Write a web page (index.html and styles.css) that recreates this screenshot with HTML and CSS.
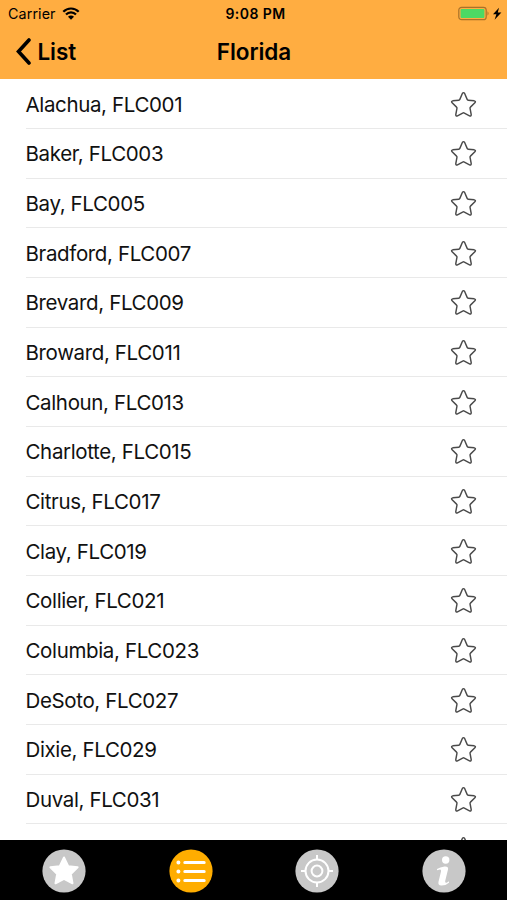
FILE: index.html
```html
<!DOCTYPE html>
<html lang="en">
<head>
<meta charset="utf-8">
<title>Florida</title>
<link rel="stylesheet" href="styles.css">
</head>
<body>
<svg width="0" height="0" class="defs" aria-hidden="true">
  <symbol id="star" viewBox="0 0 28 28">
    <path d="M12.8 2.6Q14 .8 15.2 2.6L17.8 8.7Q18.1 9.4 18.9 9.5L25.1 10.2Q27.2 10.7 25.8 12.3L21.2 16.7Q20.6 17.2 20.8 18L22 24.5Q22.1 26.6 20.2 25.7L14.9 22.9Q14 22.4 13.1 22.9L7.8 25.7Q5.9 26.6 6 24.5L7.2 18Q7.4 17.2 6.8 16.7L2.2 12.3Q.8 10.7 2.9 10.2L9.1 9.5Q9.9 9.4 10.2 8.7Z"/>
  </symbol>
</svg>
<div class="screen">
  <header class="header">
    <div class="status">
      <div class="carrier"><span>Carrier</span>
        <svg width="18" height="13" viewBox="0 0 18 13"><path d="M1.3 4.8A10.6 10.6 0 0 1 16.7 4.8M4 7.6A6.8 6.8 0 0 1 14 7.6" fill="none" stroke="#000" stroke-width="2.2"/><path d="M6 9.7A4.1 4.1 0 0 1 12 9.7L9 12.7Z"/></svg>
      </div>
      <span class="time">9:08 PM</span>
      <div class="power">
        <svg width="44" height="16" viewBox="0 0 44 16"><rect x=".8" y="1.3" width="27.4" height="12.4" rx="2.8" fill="none" stroke="#a9722a" stroke-width="1.2"/><rect x="2.6" y="3.1" width="23.8" height="8.8" rx="1" fill="#4cd964"/><path d="M29.5 5.3Q31.6 7.5 29.5 9.7Z" fill="#a9722a"/><path d="M41 1.8L35 8.2H38.4L36.6 13.8L43.4 6.6H39.8Z"/></svg>
      </div>
    </div>
    <nav class="nav">
      <a class="back"><svg width="16" height="27" viewBox="0 0 16 27"><path d="M14 2L3.5 13.5L14 25" fill="none" stroke="#000" stroke-width="3.6" stroke-linecap="round"/></svg><span>List</span></a>
      <h1>Florida</h1>
      <span></span>
    </nav>
  </header>
  <ul class="list">
    <li><span>Alachua, FLC001</span><svg class="star"><use href="#star"/></svg></li>
    <li><span>Baker, FLC003</span><svg class="star"><use href="#star"/></svg></li>
    <li><span>Bay, FLC005</span><svg class="star"><use href="#star"/></svg></li>
    <li><span>Bradford, FLC007</span><svg class="star"><use href="#star"/></svg></li>
    <li><span>Brevard, FLC009</span><svg class="star"><use href="#star"/></svg></li>
    <li><span>Broward, FLC011</span><svg class="star"><use href="#star"/></svg></li>
    <li><span>Calhoun, FLC013</span><svg class="star"><use href="#star"/></svg></li>
    <li><span>Charlotte, FLC015</span><svg class="star"><use href="#star"/></svg></li>
    <li><span>Citrus, FLC017</span><svg class="star"><use href="#star"/></svg></li>
    <li><span>Clay, FLC019</span><svg class="star"><use href="#star"/></svg></li>
    <li><span>Collier, FLC021</span><svg class="star"><use href="#star"/></svg></li>
    <li><span>Columbia, FLC023</span><svg class="star"><use href="#star"/></svg></li>
    <li><span>DeSoto, FLC027</span><svg class="star"><use href="#star"/></svg></li>
    <li><span>Dixie, FLC029</span><svg class="star"><use href="#star"/></svg></li>
    <li><span>Duval, FLC031</span><svg class="star"><use href="#star"/></svg></li>
    <li><span></span><svg class="star"><use href="#star"/></svg></li>
  </ul>
  <footer class="tabs">
    <a><svg viewBox="0 0 44 44"><circle cx="22" cy="22" r="21.6"/><path d="M22 8.5L26.2 17.2L35.6 18.3L28.8 25L30.5 34.3L22 29.8L13.5 34.3L15.2 25L8.4 18.3L17.8 17.2Z" fill="#fff" stroke="#fff" stroke-width="2" stroke-linejoin="round"/></svg></a>
    <a class="active"><svg viewBox="0 0 44 44"><circle cx="22" cy="22" r="21.6"/><g stroke="#fff" stroke-width="3" stroke-linecap="round"><path d="M15.8 13.4H35.2M15.8 22.4H35.2M15.8 31.5H35.2"/><path d="M9.4 13.4h.01M9.4 22.4h.01M9.4 31.5h.01" stroke-width="4"/></g></svg></a>
    <a><svg viewBox="0 0 44 44"><circle cx="22" cy="22" r="21.6"/><g fill="none" stroke="#fff" stroke-width="2"><circle cx="22" cy="22" r="11.5"/><circle cx="22" cy="22" r="5.4"/><path d="M22 6V11M22 33V38M6 22H11M33 22H38"/></g></svg></a>
    <a><svg viewBox="0 0 44 44"><circle cx="22" cy="22" r="21.6"/><circle cx="23.7" cy="11" r="3.7" fill="#fff"/><path d="M15 20Q18 18 22.5 17.5Q26.8 17.2 26 20.5L23.2 32Q22.8 34.3 25 33.4L27 32.3V33.7Q23.5 36.8 19.2 36.6Q15.7 36.3 16.5 32.7L19 22.4Q19.3 20.5 18 20.6L15 21.3Z" fill="#fff"/></svg></a>
  </footer>
</div>
</body>
</html>
```
FILE: styles.css
```css
* { box-sizing: border-box; }
body { margin: 0; background: #fff; color: #000; font-family: Inter, "Liberation Sans", sans-serif; }
.defs { position: absolute; }
.screen { width: 507px; height: 900px; display: flex; flex-direction: column; overflow: hidden; }
.header { flex: none; height: 79.4px; background: #ffad41; }
.status { display: grid; grid-template-columns: 1fr auto 1fr; align-items: center; height: 27px; padding: 0 5px 0 8px; }
.carrier { display: flex; align-items: center; gap: 6px; font-size: 14.3px; letter-spacing: .1px; }
.carrier svg { margin-bottom: 1px; }
.time { font-size: 14px; font-weight: 600; letter-spacing: .45px; margin-left: 1px; }
.power { display: flex; justify-content: flex-end; }
.power svg { display: block; }
.nav { display: grid; grid-template-columns: 1fr auto 1fr; align-items: center; height: 49px; padding: 0 14px 0 15px; }
.back { display: flex; align-items: center; gap: 6.5px; font-size: 22.5px; font-weight: 600; letter-spacing: -.1px; }
.nav h1 { margin: 0; font-size: 22.5px; font-weight: 600; letter-spacing: -.05px; }
.list { flex: 1; min-height: 0; overflow: hidden; list-style: none; margin: 0; padding: 0 0 0 25.5px; }
.list li { display: flex; align-items: center; justify-content: space-between; height: 49.68px; padding: .8px 30px 0 0; border-bottom: 1px solid #e9e9e9; font-size: 20.5px; letter-spacing: -.36px; color: #111; }
.star { width: 27px; height: 27px; fill: none; stroke: #4a4a4a; stroke-width: 1.5; }
.tabs { flex: none; height: 60px; padding: 1px 0 0 1px; background: #000; display: grid; grid-template-columns: repeat(4, 1fr); place-items: center; }
.tabs svg { display: block; width: 44px; height: 44px; fill: #c8c8c8; }
.tabs .active svg { fill: #ffad00; }
```
